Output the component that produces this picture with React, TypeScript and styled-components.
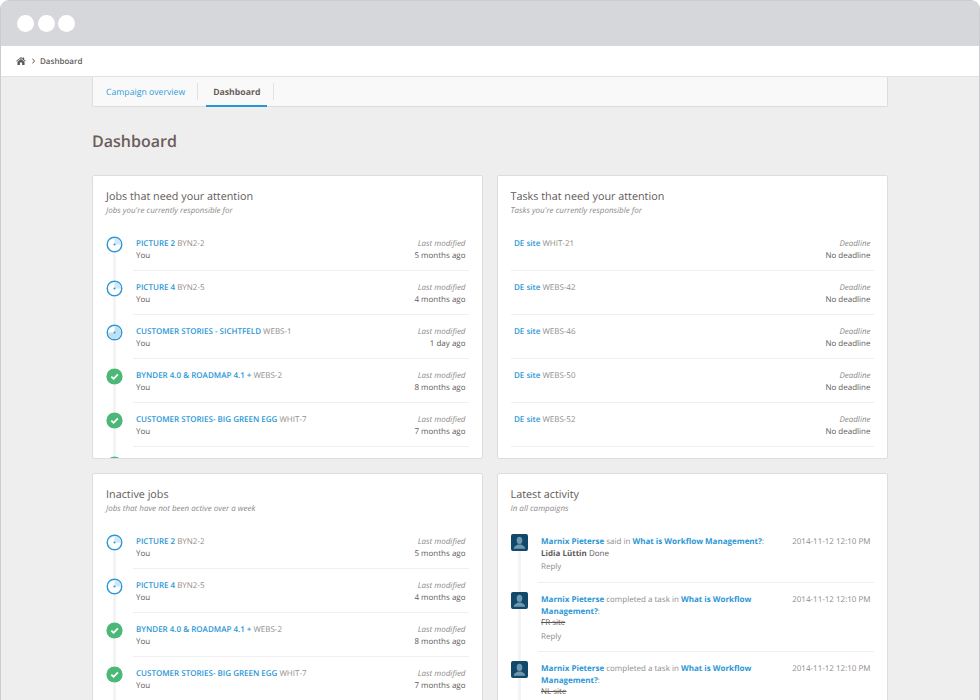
import React, { FC, Fragment } from 'react';
import styled, { createGlobalStyle } from 'styled-components';

const GlobalStyle = createGlobalStyle`
  html, body {
    margin: 0;
    padding: 0;
    height: 700px;
    overflow: hidden;
    background: #fff;
    font-family: "Open Sans", "Liberation Sans", sans-serif;
    text-rendering: geometricPrecision;
  }
`;

const Frame = styled.div`
  width: 980px;
  height: 700px;
  box-sizing: border-box;
  overflow: hidden;
  background: #eeeeee;
  border: 1px solid #cbccd0;
  border-bottom: 0;
  border-radius: 9px 9px 0 0;
  display: flex;
  flex-direction: column;
`;

const TitleBar = styled.div`
  height: 45px;
  flex: none;
  background: #d6d7da;
  display: flex;
  align-items: center;
  gap: 3.5px;
  padding: 0 0 1px 16px;
  box-sizing: border-box;
`;

const Dot = styled.span`
  width: 17px;
  height: 17px;
  border-radius: 50%;
  background: #fff;
`;

const Breadcrumb = styled.div`
  height: 31px;
  flex: none;
  box-sizing: border-box;
  background: #fff;
  border-bottom: 1px solid #e2e2e2;
  display: flex;
  align-items: center;
  padding-left: 15px;
  gap: 5.5px;
  font-size: 8px;
  font-weight: 600;
  color: #5f5a58;
`;

const Content = styled.div`
  width: 796px;
  margin-left: 91px;
`;

const Tabs = styled.div`
  height: 30px;
  box-sizing: border-box;
  background: #f9f9f9;
  border: 1px solid #dddddd;
  border-top: 0;
  border-radius: 0 0 2px 2px;
  display: flex;
`;

const Tab = styled.div<{ $active?: boolean }>`
  height: 30px;
  box-sizing: border-box;
  position: relative;
  display: flex;
  align-items: center;
  margin-left: ${p => (p.$active ? '8px' : '0')};
  padding: 0 ${p => (p.$active ? '7px' : '13px')};
  font-size: 8.7px;
  font-weight: ${p => (p.$active ? 700 : 400)};
  color: ${p => (p.$active ? '#6b5d5a' : '#2f9ad8')};
  border-top: 2px solid transparent;
  border-bottom: 2px solid ${p => (p.$active ? '#2596d6' : 'transparent')};

  &::after {
    content: '';
    position: absolute;
    right: ${p => (p.$active ? '-7px' : '0')};
    top: 4px;
    height: 17px;
    width: 1px;
    background: #e2e2e2;
  }
`;

const Heading = styled.h1`
  margin: 22px 0 22px;
  font-size: 16px;
  line-height: 24px;
  font-weight: 600;
  color: #6b5d5a;
`;

const Grid = styled.div`
  display: grid;
  grid-template-columns: 390.5px 391px;
  grid-auto-rows: 284px;
  column-gap: 14px;
  row-gap: 14px;
`;

const Card = styled.section`
  box-sizing: border-box;
  background: #fff;
  border: 1px solid #dddddd;
  border-radius: 2px;
  padding: 13px 13px 0;
  overflow: hidden;
`;

const CardTitle = styled.h2`
  margin: 0;
  font-size: 10.8px;
  line-height: 16px;
  font-weight: 400;
  color: #5f5a58;
`;

const CardSubtitle = styled.div`
  font-size: 8px;
  line-height: 11px;
  font-style: italic;
  color: #8d8a88;
  margin-bottom: 11px;
`;

const RowWrap = styled.div<{ $height?: number }>`
  display: flex;
  height: ${p => p.$height ?? 44}px;
`;

const Gutter = styled.div`
  width: 27px;
  flex: none;
  display: flex;
  flex-direction: column;
  align-items: flex-start;
`;

const GutterIcon = styled.div`
  width: 17px;
  height: 17px;
  flex: none;
`;

const GutterLine = styled.div<{ $lead?: boolean; $hidden?: boolean }>`
  width: 3px;
  margin-left: 7px;
  flex: ${p => (p.$lead ? '0 0 9px' : '1')};
  background: ${p => (p.$hidden ? 'transparent' : '#f4f4f4')};
`;

const RowBody = styled.div`
  flex: 1;
  display: flex;
  justify-content: space-between;
  box-sizing: border-box;
  padding: 11px 3px 0 3px;
  border-bottom: 1px solid #efefef;
  font-size: 8px;
  line-height: 12px;
  color: #5f5a58;
`;

const TaskBody = styled(RowBody)`
  padding-left: 3.5px;
`;

const LinkText = styled.span<{ $bold?: boolean }>`
  color: #2c97d6;
  font-weight: ${p => (p.$bold ? 700 : 600)};
`;

const Code = styled.span`
  color: #8f8c8a;
`;

const Right = styled.div`
  text-align: right;
`;

const Muted = styled.div`
  font-style: italic;
  color: #8d8a88;
`;

const ActivityBody = styled.div`
  flex: 1;
  display: flex;
  justify-content: space-between;
  box-sizing: border-box;
  padding: 11px 3px 0 3.5px;
  border-bottom: 1px solid #efefef;
  font-size: 8px;
  line-height: 11.6px;
  color: #8f8c8a;
`;

const ActivityText = styled.div`
  width: 235px;
`;

const Author = styled.span`
  color: #5f5a58;
  font-weight: 700;
`;

const Dark = styled.span`
  color: #5f5a58;
`;

const Struck = styled.div`
  color: #5f5a58;
  text-decoration: line-through;
`;

const Reply = styled.div`
  margin-top: 2px;
  color: #8f8c8a;
`;

const Stamp = styled.div`
  color: #8f8c8a;
  white-space: nowrap;
`;

const HomeIcon: FC = () => (
  <svg width="10" height="8" viewBox="0 0 22 18" fill="#5f5a58">
    <path d="M11 0 L15 3.2 V1.2 H18 V5.6 L22 9 L20.6 10.4 L11 2.6 L1.4 10.4 L0 9 Z" />
    <path d="M11 4.4 L19 10.8 V18 H13.4 V12.6 H8.6 V18 H3 V10.8 Z" />
  </svg>
);

const Chevron: FC = () => (
  <svg width="3" height="6" viewBox="0 0 3 6" fill="none" stroke="#5f5a58" strokeWidth="1">
    <path d="M0.4 0.6 L2.5 3 L0.4 5.4" />
  </svg>
);

const ClockIcon: FC<{ pale?: boolean }> = ({ pale }) => (
  <svg width="17" height="17" viewBox="0 0 18 18">
    <circle cx="9" cy="9" r="7.7" fill="#fff" stroke="#2c97d6" strokeWidth="1.5" />
    {pale ? (
      <path d="M9 9 V2 A7 7 0 1 1 2 9 Z" fill="#bfe0f4" />
    ) : (
      <path d="M9 9 V2 A7 7 0 0 1 16 9 Z" fill="#cfe8f7" />
    )}
    <circle cx="9" cy="9" r="1.1" fill="#2c97d6" />
  </svg>
);

const CheckIcon: FC = () => (
  <svg width="17" height="17" viewBox="0 0 18 18">
    <circle cx="9" cy="9" r="8.6" fill="#4cb878" />
    <path d="M5.6 9.2 L8 11.4 L12.6 6.8" fill="none" stroke="#fff" strokeWidth="1.9" />
  </svg>
);

const AvatarIcon: FC = () => (
  <svg width="17" height="17" viewBox="0 0 18 18">
    <rect width="18" height="18" rx="2" fill="#12496b" />
    <ellipse cx="9" cy="6.8" rx="3" ry="3.8" fill="#6f97ad" />
    <path d="M3 15.5 C3 12.5 6 12 7.4 11 H10.6 C12 12 15 12.5 15 15.5 Z" fill="#6f97ad" />
  </svg>
);

type JobStatus = 'progress' | 'started' | 'done';

interface Job {
  name: string;
  code: string;
  age: string;
  status: JobStatus;
}

const attentionJobs: Job[] = [
  { name: 'PICTURE 2', code: 'BYN2-2', age: '5 months ago', status: 'progress' },
  { name: 'PICTURE 4', code: 'BYN2-5', age: '4 months ago', status: 'progress' },
  { name: 'CUSTOMER STORIES - SICHTFELD', code: 'WEBS-1', age: '1 day ago', status: 'started' },
  { name: 'BYNDER 4.0 & ROADMAP 4.1 +', code: 'WEBS-2', age: '8 months ago', status: 'done' },
  { name: 'CUSTOMER STORIES- BIG GREEN EGG', code: 'WHIT-7', age: '7 months ago', status: 'done' },
];

const inactiveJobs: Job[] = [attentionJobs[0], attentionJobs[1], attentionJobs[3], attentionJobs[4]];

const tasks = [
  { name: 'DE site', code: 'WHIT-21' },
  { name: 'DE site', code: 'WEBS-42' },
  { name: 'DE site', code: 'WEBS-46' },
  { name: 'DE site', code: 'WEBS-50' },
  { name: 'DE site', code: 'WEBS-52' },
];

const activity = [
  { verb: 'said in', height: 58, reply: true },
  { verb: 'completed a task in', struck: 'FR site', height: 69, reply: true },
  { verb: 'completed a task in', struck: 'NL site', height: 69, reply: false },
];

const StatusIcon: FC<{ status: JobStatus }> = ({ status }) => {
  if (status === 'done') return <CheckIcon />;
  return <ClockIcon pale={status === 'started'} />;
};

const JobList: FC<{ jobs: Job[]; trailing?: JobStatus }> = ({ jobs, trailing }) => (
  <Fragment>
    {jobs.map((job, i) => (
      <RowWrap key={job.code}>
        <Gutter>
          <GutterLine $lead $hidden={i === 0} />
          <GutterIcon>
            <StatusIcon status={job.status} />
          </GutterIcon>
          <GutterLine />
        </Gutter>
        <RowBody>
          <div>
            <LinkText>{job.name}</LinkText> <Code>{job.code}</Code>
            <div>You</div>
          </div>
          <Right>
            <Muted>Last modified</Muted>
            {job.age}
          </Right>
        </RowBody>
      </RowWrap>
    ))}
    {/* next row is cut off by the card, only its icon shows */}
    {trailing && (
      <RowWrap>
        <Gutter>
          <GutterLine $lead />
          <GutterIcon>
            <StatusIcon status={trailing} />
          </GutterIcon>
        </Gutter>
      </RowWrap>
    )}
  </Fragment>
);

export default function App() {
  return (
    <Frame>
      <GlobalStyle />
      <TitleBar>
        <Dot />
        <Dot />
        <Dot />
      </TitleBar>
      <Breadcrumb>
        <HomeIcon />
        <Chevron />
        Dashboard
      </Breadcrumb>
      <Content>
        <Tabs>
          <Tab>Campaign overview</Tab>
          <Tab $active>Dashboard</Tab>
        </Tabs>
        <Heading>Dashboard</Heading>
        <Grid>
          <Card>
            <CardTitle>Jobs that need your attention</CardTitle>
            <CardSubtitle>Jobs you're currently responsible for</CardSubtitle>
            <JobList jobs={attentionJobs} trailing="done" />
          </Card>
          <Card>
            <CardTitle>Tasks that need your attention</CardTitle>
            <CardSubtitle>Tasks you're currently responsible for</CardSubtitle>
            {tasks.map(task => (
              <RowWrap key={task.code}>
                <TaskBody>
                  <div>
                    <LinkText>{task.name}</LinkText> <Code>{task.code}</Code>
                  </div>
                  <Right>
                    <Muted>Deadline</Muted>
                    No deadline
                  </Right>
                </TaskBody>
              </RowWrap>
            ))}
          </Card>
          <Card>
            <CardTitle>Inactive jobs</CardTitle>
            <CardSubtitle>Jobs that have not been active over a week</CardSubtitle>
            <JobList jobs={inactiveJobs} />
          </Card>
          <Card>
            <CardTitle>Latest activity</CardTitle>
            <CardSubtitle>In all campaigns</CardSubtitle>
            {activity.map((item, i) => (
              <RowWrap key={i} $height={item.height}>
                <Gutter>
                  <GutterLine $lead $hidden={i === 0} />
                  <GutterIcon>
                    <AvatarIcon />
                  </GutterIcon>
                  <GutterLine />
                </Gutter>
                <ActivityBody>
                  <ActivityText>
                    <LinkText $bold>Marnix Pieterse</LinkText> {item.verb}{' '}
                    <LinkText $bold>What is Workflow</LinkText>{' '}
                    <LinkText $bold>Management?</LinkText>:
                    {item.struck ? (
                      <Struck>{item.struck}</Struck>
                    ) : (
                      <div>
                        <Author>Lidia Lüttin</Author> <Dark>Done</Dark>
                      </div>
                    )}
                    {item.reply && <Reply>Reply</Reply>}
                  </ActivityText>
                  <Stamp>2014-11-12 12:10 PM</Stamp>
                </ActivityBody>
              </RowWrap>
            ))}
          </Card>
        </Grid>
      </Content>
    </Frame>
  );
}
